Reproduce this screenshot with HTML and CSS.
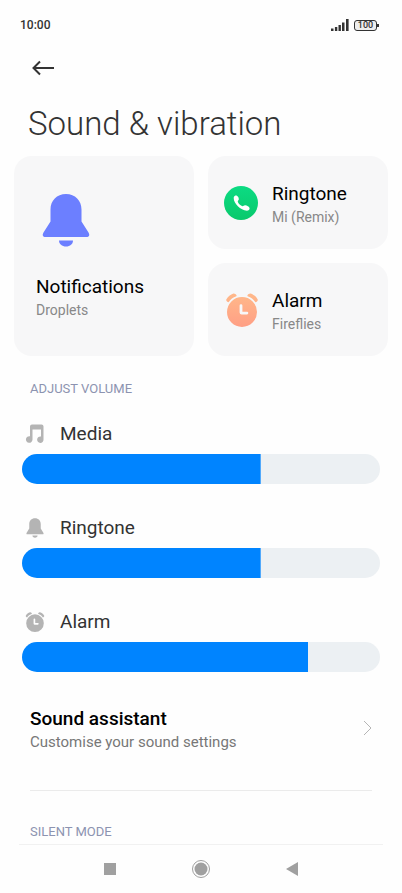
FILE: index.html
```html
<!DOCTYPE html>
<html lang="en-GB">
<head>
  <meta charset="UTF-8" />
  <meta name="viewport" content="width=device-width, initial-scale=1.0"/>
  <title>Sound &amp; vibration</title>
  <link rel="stylesheet" href="styles.css">
</head>
<body>
  <!-- shared icon shapes -->
  <svg class="sprite" aria-hidden="true">
    <symbol id="bell" viewBox="0 0 48 54">
      <path d="M24 1C14.800 1 8.500 7.500 8.500 16.500V28.500L1.500 39.500C0 42 .8 44 3.500 44H44.500C47.200 44 48 42 46.500 39.500L39.500 28.500V16.500C39.500 7.500 33.200 1 24 1Z"/>
      <path d="M17 47.500H31C31 51 28 53.500 24 53.500S17 51 17 47.500Z"/>
    </symbol>
    <symbol id="clock" viewBox="0 0 32 34">
      <path fill-rule="evenodd" d="M16 4A15 15 0 1 1 16 34A15 15 0 1 1 16 4ZM13.600 12.500V19.500Q13.600 21.500 15.600 21.500H21Q22.300 21.500 22.300 20.100T21 18.700H16.400V12.500Q16.400 11.200 15 11.200T13.600 12.500Z"/>
      <path d="M.3 6.500C1.800 3.500 4.500 1.500 7.500 .5C8.600 .3 9.800 1.200 10.600 2.200L10.400 3.200C7 4.300 4.500 6.300 2.600 9.200C1.400 9 -.2 8 .3 6.500Z"/>
      <path d="M31.700 6.500C30.200 3.500 27.500 1.500 24.500 .5C23.400 .3 22.200 1.200 21.400 2.200L21.600 3.200C25 4.300 27.500 6.300 29.400 9.200C30.600 9 32.200 8 31.700 6.500Z"/>
    </symbol>
  </svg>

  <div class="status-bar">
    <span>10:00</span>
    <div class="status-icons">
      <svg class="signal" viewBox="0 0 18 12" aria-hidden="true">
        <path d="M0 9.500H2.500V12H0ZM3.900 8H6.300V12H3.900ZM7.500 6H9.900V12H7.500ZM11 3.500H13.500V12H11ZM15 0H17.600V12H15Z"/>
      </svg>
      <span class="battery">100</span>
    </div>
  </div>

  <header>
    <button class="back" aria-label="Back">
      <svg viewBox="0 0 22 16" aria-hidden="true">
        <path d="M8 1.500L1.500 8L8 14.500M1.500 8H22"/>
      </svg>
    </button>
    <h1>Sound &amp; vibration</h1>
  </header>

  <main>
    <div class="cards">
      <button class="card card-large">
        <svg class="card-bell" aria-hidden="true"><use href="#bell"/></svg>
        <span class="card-text">
          <span class="card-title">Notifications</span>
          <span class="card-value">Droplets</span>
        </span>
      </button>
      <button class="card">
        <svg class="card-icon" viewBox="0 0 34 34" aria-hidden="true">
          <defs>
            <linearGradient id="green" x2="0" y2="1">
              <stop stop-color="#0cdb83"/>
              <stop offset="1" stop-color="#09c96c"/>
            </linearGradient>
          </defs>
          <circle cx="17" cy="17" r="17" fill="url(#green)"/>
          <path fill="#fff" d="M9.800 11.200C10.200 9.800 11.800 9.200 12.900 9.700C14.200 10.300 15 12 14.800 13.600C14.700 14.500 13.600 14.900 13.800 15.800C14.300 17.600 16.600 19.800 18.500 20.300C19.300 20.400 19.900 19.400 21 19.300C22.700 19.200 25.300 20.700 25.600 22.200C25.700 23.600 24.500 24.700 22.900 24.700C16.500 24.200 9.700 17.600 9.700 12Z"/>
        </svg>
        <span class="card-text">
          <span class="card-title">Ringtone</span>
          <span class="card-value">Mi (Remix)</span>
        </span>
      </button>
      <button class="card">
        <svg class="card-icon card-clock" viewBox="0 0 32 34" aria-hidden="true">
          <defs>
            <linearGradient id="orange" x2="0" y2="34" gradientUnits="userSpaceOnUse">
              <stop stop-color="#ffb98a"/>
              <stop offset="1" stop-color="#ff9f85"/>
            </linearGradient>
          </defs>
          <use href="#clock" fill="url(#orange)"/>
        </svg>
        <span class="card-text">
          <span class="card-title">Alarm</span>
          <span class="card-value">Fireflies</span>
        </span>
      </button>
    </div>

    <section>
      <h2>ADJUST VOLUME</h2>
      <div class="volume">
        <label for="media">
          <svg viewBox="0 0 20 20" aria-hidden="true">
            <path d="M5 2.500Q5 .5 7 .5H16.500Q18.500 .5 18.500 2.500V15.500A3.200 3.200 0 1 1 16 12.600V5.500H7.500V15.500A3.300 3.300 0 1 1 5 12.300Z"/>
          </svg>
          Media
        </label>
        <input type="range" id="media" max="15" value="10" style="--level: 10">
      </div>
      <div class="volume">
        <label for="ringtone">
          <svg aria-hidden="true"><use href="#bell"/></svg>
          Ringtone
        </label>
        <input type="range" id="ringtone" max="15" value="10" style="--level: 10">
      </div>
      <div class="volume">
        <label for="alarm">
          <svg aria-hidden="true"><use href="#clock"/></svg>
          Alarm
        </label>
        <input type="range" id="alarm" max="15" value="12" style="--level: 12">
      </div>
    </section>

    <a class="row" href="#assistant">
      <span>
        <span class="row-title">Sound assistant</span>
        <span class="row-text">Customise your sound settings</span>
      </span>
      <svg class="chevron" viewBox="0 0 9 16" aria-hidden="true">
        <path d="M1 1L8 8L1 15"/>
      </svg>
    </a>

    <section class="silent">
      <h2>SILENT MODE</h2>
    </section>
  </main>

  <nav>
    <button aria-label="Recent apps">
      <svg viewBox="0 0 20 20"><rect x="4" y="4" width="12" height="12"/></svg>
    </button>
    <button aria-label="Home">
      <svg viewBox="0 0 20 20">
        <circle cx="10" cy="10" r="6.500"/>
        <circle class="ring" cx="10" cy="10" r="8.500"/>
      </svg>
    </button>
    <button aria-label="Back">
      <svg viewBox="0 0 20 20"><path d="M16 3V17L4 10Z"/></svg>
    </button>
  </nav>

  <script>
    document.querySelectorAll('.volume input').forEach(input => {
      input.addEventListener('input', () => {
        input.style.setProperty('--level', input.value);
      });
    });
  </script>
</body>
</html>
```
FILE: styles.css
```css
* {
  box-sizing: border-box;
}

body {
  font-family: Roboto, sans-serif;
  margin: 0;
  min-height: 100vh;
  display: flex;
  flex-direction: column;
  background: #fefefe;
  color: #333;
}

button {
  font-family: inherit;
  border: none;
  padding: 0;
  background: none;
  cursor: pointer;
}

svg {
  display: block;
  flex: none;
}

.sprite {
  position: absolute;
  width: 0;
  height: 0;
}

.status-bar {
  display: flex;
  justify-content: space-between;
  align-items: center;
  height: 48px;
  padding: 2px 22px 0 20px;
  font-size: 12px;
  font-weight: 500;
}

.status-icons {
  display: flex;
  align-items: center;
  gap: 5px;
}

.signal {
  width: 18px;
  height: 12px;
  fill: #333;
}

.battery {
  position: relative;
  width: 23px;
  height: 11px;
  margin-right: 3px;
  border: 1px solid #333;
  border-radius: 3px;
  font-size: 9px;
  line-height: 9px;
  text-align: center;
  background: #eee;
}

.battery::after {
  content: "";
  position: absolute;
  left: 100%;
  top: 3px;
  width: 2px;
  height: 3px;
  margin-left: 1px;
  background: #333;
}

header {
  padding: 12px 28px 0;
}

.back {
  display: block;
  padding: 0 4px;
}

.back svg {
  width: 22px;
  height: 16px;
  fill: none;
  stroke: #333;
  stroke-width: 2;
}

h1 {
  margin: 28px 0 12px;
  font-size: 33px;
  line-height: 40px;
  font-weight: 300;
}

.cards {
  display: grid;
  grid-template-columns: 1fr 1fr;
  grid-auto-rows: 93px;
  gap: 14px;
  padding: 0 14px;
}

.card {
  display: flex;
  align-items: center;
  gap: 14px;
  padding: 0 16px;
  border-radius: 18px;
  background: #f7f7f8;
  text-align: left;
}

.card-text {
  padding-top: 4px;
}

.card-large {
  grid-row: span 2;
  flex-direction: column;
  align-items: flex-start;
  justify-content: center;
  gap: 24px;
  padding: 2px 22px 0;
}

.card-bell {
  width: 48px;
  height: 54px;
  margin-left: 6px;
  fill: #6c7fff;
}

.card-icon {
  width: 34px;
  height: 34px;
}

.card-clock {
  width: 32px;
  margin-left: 2px;
}

.card-title,
.card-value,
.row-title,
.row-text {
  display: block;
}

.card-title {
  font-size: 19px;
  line-height: 24px;
  color: #000;
}

.card-value {
  font-size: 14px;
  line-height: 22px;
  color: #888;
}

h2 {
  margin: 23px 30px 0;
  font-size: 13px;
  line-height: 20px;
  font-weight: 400;
  color: #8c93b0;
}

.volume {
  padding: 22px 22px 0;
}

.volume label {
  display: flex;
  align-items: center;
  gap: 15px;
  padding-left: 3px;
  font-size: 19px;
  line-height: 26px;
}

.volume svg {
  width: 20px;
  height: 20px;
  fill: #b4b4b4;
}

.volume input {
  -webkit-appearance: none;
  appearance: none;
  display: block;
  width: 100%;
  height: 30px;
  margin: 7px 0 9px;
  border-radius: 15px;
  background: linear-gradient(#0084ff, #0084ff) no-repeat #ecf0f3;
  background-size: calc(var(--level) / 15 * 100%) 100%;
}

.volume input::-webkit-slider-thumb {
  -webkit-appearance: none;
  width: 30px;
  height: 30px;
}

.row {
  display: flex;
  justify-content: space-between;
  align-items: center;
  margin: 0 30px;
  padding: 26px 0 37px;
  border-bottom: 1px solid #ebebeb;
  color: inherit;
  text-decoration: none;
}

.row-title {
  font-size: 19px;
  line-height: 24px;
  font-weight: 500;
  color: #000;
}

.row-text {
  font-size: 15px;
  line-height: 22px;
  color: #777;
}

.chevron {
  width: 9px;
  height: 16px;
  margin-bottom: 4px;
  fill: none;
  stroke: #b5b5b5;
}

.silent h2 {
  margin-top: 31px;
}

nav {
  display: flex;
  justify-content: space-evenly;
  align-items: center;
  height: 49px;
  margin: auto 19px 0;
  padding: 0 10px;
  border-top: 1px solid #f1f1f1;
}

nav svg {
  width: 20px;
  height: 20px;
  fill: #a0a0a0;
}

nav .ring {
  fill: none;
  stroke: #a0a0a0;
}
```
